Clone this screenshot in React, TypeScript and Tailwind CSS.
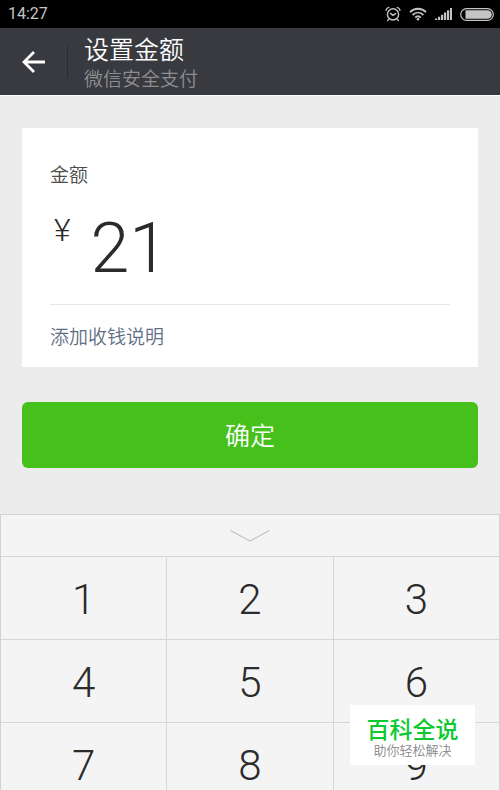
import { useState } from "react";

const KEYS = ["1", "2", "3", "4", "5", "6", "7", "8", "9"];

function StatusBar() {
  return (
    <div className="flex h-7 shrink-0 items-center justify-between bg-black pl-2 pr-1.5 text-[#c4c4c4]">
      <span className="font-['Roboto',sans-serif] text-base font-normal leading-7">14:27</span>
      <div className="flex items-center gap-2">
        <svg width="16" height="16" viewBox="0 0 16 16" fill="none" stroke="currentColor" strokeWidth="1.4" strokeLinecap="round">
          <circle cx="8" cy="8.4" r="5.6" />
          <path d="M1 4.2C1.4 2.8 2.4 1.8 3.8 1.4M15 4.2C14.6 2.8 13.6 1.8 12.2 1.4M3.8 13.2 2.6 14.6M12.2 13.2l1.2 1.4M5.6 7.4 8 9.4l2.6-1.8" />
        </svg>
        <svg width="18" height="14" viewBox="0 0 18 14" fill="none" stroke="currentColor" strokeWidth="1.8">
          <path d="M1 5.2C5.6.6 12.4.6 17 5.2M3.6 8C6.8 4.9 11.2 4.9 14.4 8M6.2 10.6c1.7-1.6 3.9-1.6 5.6 0" />
          <circle cx="9" cy="12.2" r="1.3" fill="currentColor" stroke="none" />
        </svg>
        <svg width="17" height="12" viewBox="0 0 17 12" fill="currentColor">
          <path d="M0 10.5h2.2V12H0zM3 8.8h2.2V12H3zM6 6.8h2.2V12H6zM9 4.6h2.2V12H9zM12 2.3h2.2V12H12zM15 0h2v12h-2z" />
        </svg>
        <svg width="34" height="13" viewBox="0 0 34 13" fill="none">
          <rect x=".7" y=".7" width="32.6" height="11.6" rx="5.8" stroke="currentColor" strokeWidth="1.2" />
          <path d="M5.5 2.2h22a4.3 4.3 0 0 1 0 8.6h-22z" fill="currentColor" />
        </svg>
      </div>
    </div>
  );
}

function Header() {
  return (
    <header className="flex h-[68px] shrink-0 items-center border-b border-white bg-[#393a3f]">
      <button type="button" aria-label="返回" className="flex h-full w-[67px] items-center justify-center text-white">
        <svg width="24" height="22" viewBox="0 0 24 22" fill="none" stroke="currentColor" strokeWidth="2.8">
          <path d="M23 11H2.5M12 1 2 11l10 10" />
        </svg>
      </button>
      <div className="h-8 w-px bg-[#2b2c30]" />
      <div className="pl-4">
        <h1 className="text-[25px] font-[350] leading-8 text-white">设置金额</h1>
        <p className="text-[19px] leading-7 text-[#8d8e91]">微信安全支付</p>
      </div>
    </header>
  );
}

export default function App() {
  const [amount, setAmount] = useState("21");
  const [padOpen, setPadOpen] = useState(true);

  return (
    <div className="relative flex h-screen flex-col overflow-hidden bg-[#ececec] font-['Noto_Sans_CJK_SC',sans-serif] font-[350]">
      <StatusBar />
      <Header />

      <main className="shrink-0 px-[22px] pt-8">
        <section className="bg-white px-7 pt-8">
          <label htmlFor="amount" className="block text-[19px] leading-7 text-[#4a4a4a]">
            金额
          </label>
          <div className="mt-6 flex h-[72px] pl-1 font-['Roboto',sans-serif] text-[#2b2b2b]">
            <span className="text-[32px] leading-9">¥</span>
            <input
              id="amount"
              value={amount}
              inputMode="none"
              onChange={(e) => setAmount(e.target.value)}
              className="ml-5 h-full min-w-0 flex-1 bg-transparent text-[70px] outline-none"
            />
          </div>
          <button
            type="button"
            className="mt-5 block h-[63px] w-full border-t border-[#e6e6e6] text-left text-[19px] text-[#5f6f85]"
          >
            添加收钱说明
          </button>
        </section>
        <button type="button" className="mt-[35px] h-[66px] w-full rounded-md bg-[#46c01b] text-[25px] text-white">
          确定
        </button>
      </main>

      <div className="mt-[46px] shrink-0 border border-[#d2d2d2] bg-[#f4f4f4]">
        <button
          type="button"
          aria-label="收起键盘"
          onClick={() => setPadOpen(!padOpen)}
          className="flex h-[41px] w-full items-center justify-center"
        >
          <svg width="40" height="12" viewBox="0 0 40 12" fill="none" stroke="#b4b4b4" strokeWidth="1">
            <path d="M.5.5 20 11 39.5.5" />
          </svg>
        </button>
        {padOpen && (
          <div className="grid grid-cols-3 gap-px bg-[#d6d6d6] pt-px">
            {KEYS.map((key) => (
              <button
                key={key}
                type="button"
                onClick={() => setAmount(amount + key)}
                className="h-[82px] bg-[#f4f4f4] pt-0.5 font-['Roboto',sans-serif] text-[42px] text-[#2b2b2b]"
              >
                {key}
              </button>
            ))}
          </div>
        )}
      </div>

      <div className="absolute bottom-[25px] right-[25px] flex h-[60px] w-[125px] flex-col items-center justify-center bg-white pt-1.5">
        <strong className="text-[23px] font-medium leading-6 text-[#0bc92f]">百科全说</strong>
        <span className="text-[13px] leading-5 text-[#888]">助你轻松解决</span>
      </div>
    </div>
  );
}
